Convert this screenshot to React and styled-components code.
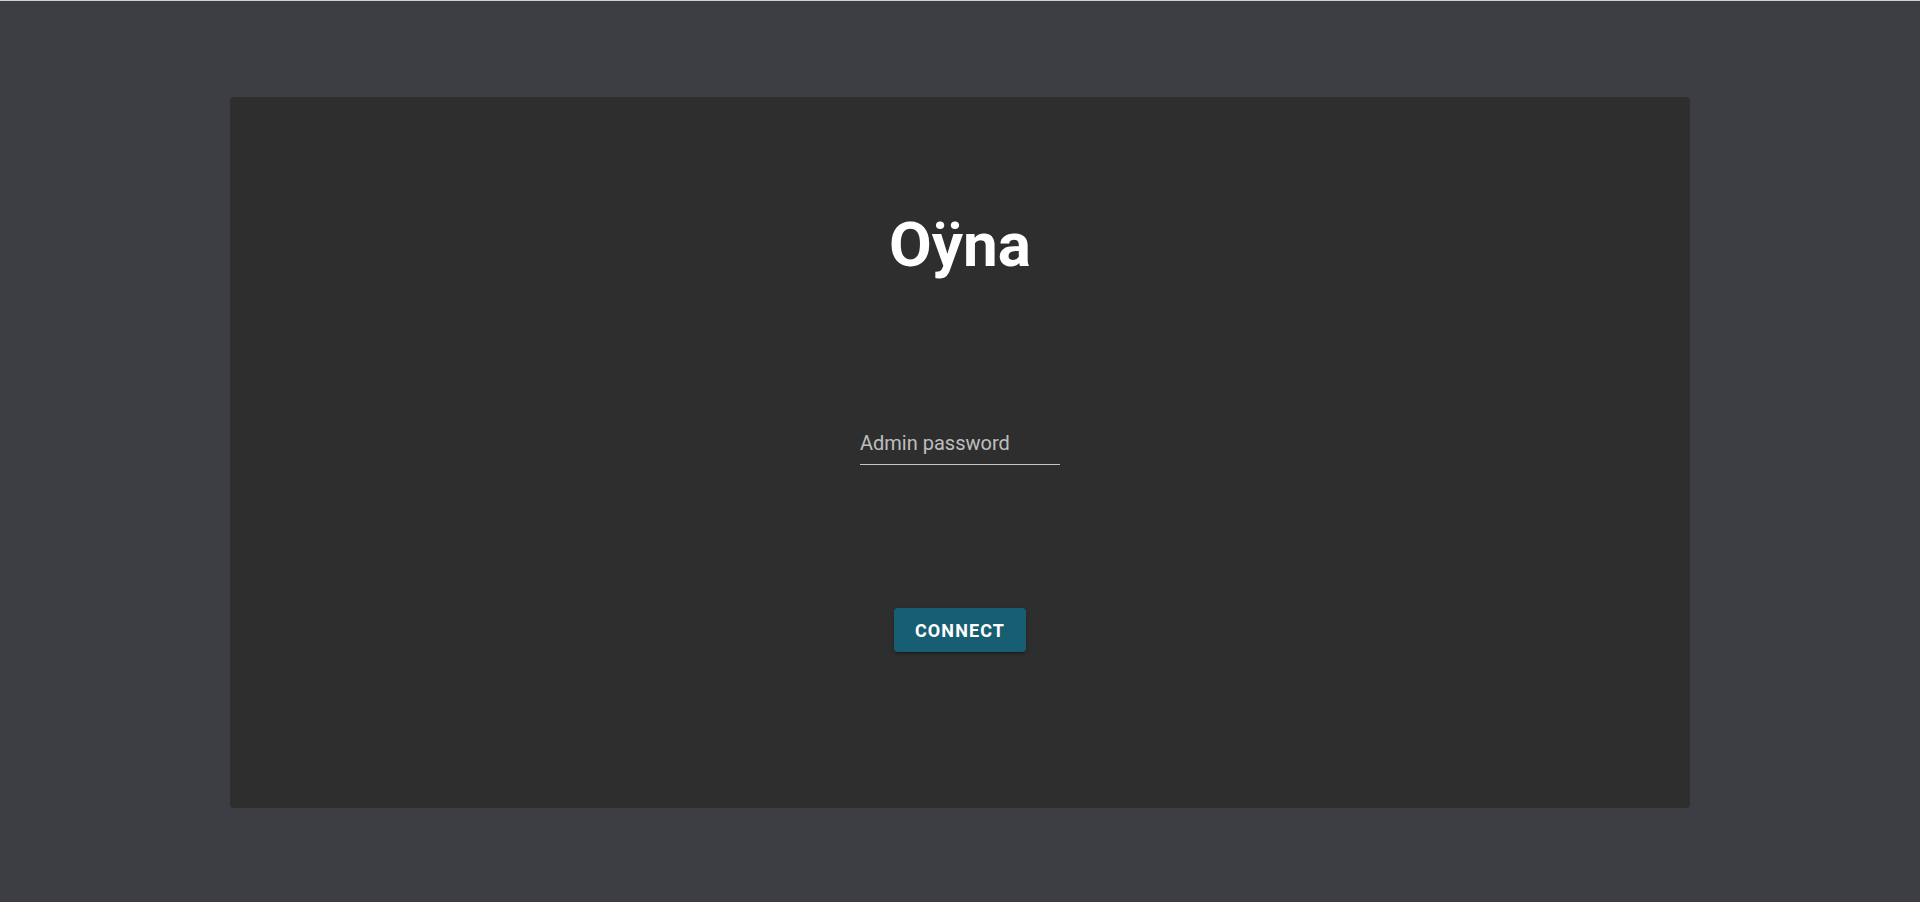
import styled, { createGlobalStyle } from 'styled-components'

const GlobalStyle = createGlobalStyle`
  html, body {
    margin: 0;
    padding: 0;
    background-color: #3d3e43;
    font-family: Roboto, "Liberation Sans", sans-serif;
  }
`;

const Page = styled.div`
  box-sizing: border-box;
  min-height: 902px;
  border-top: 1px solid #cfcfd1;
  padding-top: 96px;
  display: flex;
  justify-content: center;
`;

const Card = styled.main`
  box-sizing: border-box;
  width: 1460px;
  height: 711px;
  padding-top: 112px;
  display: flex;
  flex-direction: column;
  align-items: center;

  background-color: #2e2e2e;
  border-radius: 4px;
`;

const Title = styled.h1`
  margin: 0;
  font-size: 62px;
  line-height: 72px;
  font-weight: 700;
  color: #ffffff;
`;

const Field = styled.label`
  display: block;
  width: 200px;
  margin-top: 150px;
  border-bottom: 1px solid rgba(255, 255, 255, 0.72);
`;

const Input = styled.input`
  display: block;
  box-sizing: border-box;
  width: 100%;
  padding: 0 0 9px;
  border: none;
  outline: none;
  background: transparent;

  font-family: inherit;
  font-size: 20px;
  line-height: 24px;
  color: #ffffff;

  &::placeholder {
    color: rgba(255, 255, 255, 0.7);
    opacity: 1;
  }
`;

const ConnectButton = styled.button`
  margin-top: 143px;
  width: 132px;
  height: 44px;

  border: none;
  border-radius: 4px;
  background-color: #175e73;
  box-shadow: 0 3px 1px -2px rgba(0, 0, 0, 0.2), 0 2px 2px 0 rgba(0, 0, 0, 0.14), 0 1px 5px 0 rgba(0, 0, 0, 0.12);
  cursor: pointer;

  font-family: inherit;
  font-size: 18px;
  font-weight: 700;
  letter-spacing: 1.1px;
  color: #ffffff;
`;

export default function App() {
  return (
    <>
      <GlobalStyle />
      <Page>
        <Card>
          <Title>Oÿna</Title>
          <Field>
            <Input type="password" placeholder="Admin password" />
          </Field>
          <ConnectButton>CONNECT</ConnectButton>
        </Card>
      </Page>
    </>
  )
}
